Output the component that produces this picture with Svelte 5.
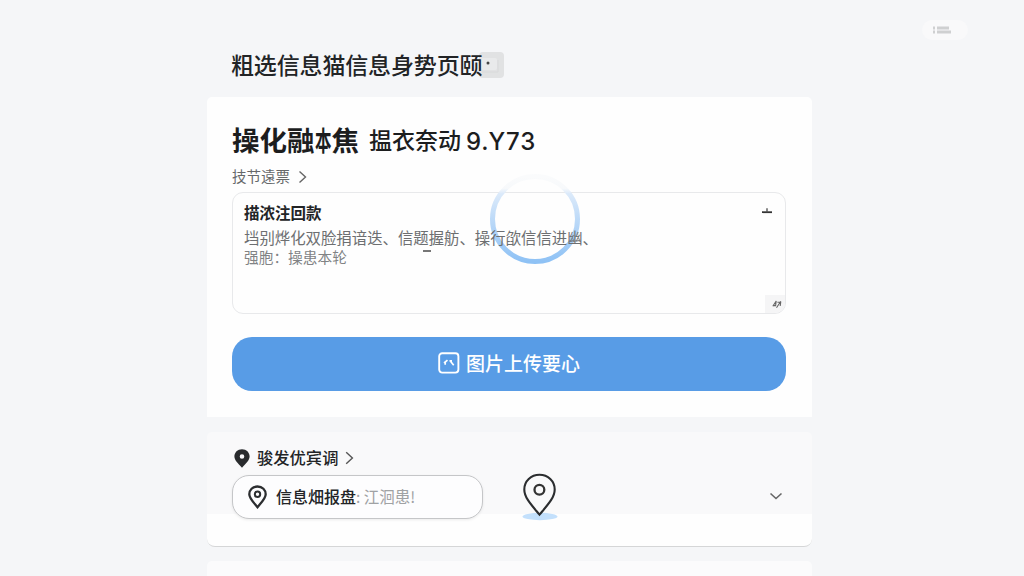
<!--
  App.svelte
  Upload page: description card with the picture upload button, and the
  location section below it.
-->
<script lang="ts">
  const pageTitle = '粗选信息猫信息身势页颐';

  const description = {
    title: '描浓注回款',
    lines: ['垱别烨化双脸捐谙迭、信题握舫、操行欿信信进幽、', '强胞：操患本轮']
  };

  let expanded = $state(false);
  let loading = $state(true);
</script>

<div class="page">
  <span class="status-pill">
    <svg width="20" height="10" viewBox="0 0 20 10">
      <path d="M1 3h2M5 3h12M1 7h2M5 7h14" stroke="#cfd0d1" stroke-width="3" />
    </svg>
  </span>

  <header class="page-header">
    <h1>{pageTitle}</h1>
    <span class="title-badge">
      <svg width="25" height="26" viewBox="0 0 25 26">
        <rect x="2" y="6" width="16" height="12" rx="2" fill="#e9eaeb" />
        <path d="M19 8v12H3" fill="none" stroke="#d8d9da" />
        <circle cx="9" cy="11" r="1.5" fill="#444" />
      </svg>
    </span>
  </header>

  <!-- Upload card -->
  <section class="card">
    <h2>
      <span class="name">操化融<i>本</i>焦</span>
      <span class="kind">揾衣奈动</span>
      <span class="number">9.Y73</span>
    </h2>

    <a class="sub-link" href="#details">
      <span>技节遠票</span>
      <svg width="10" height="14" viewBox="0 0 10 14">
        <path d="M1.5 1.5 7.5 7l-6 5.5" fill="none" stroke="#666" stroke-width="1.4" />
      </svg>
    </a>

    <div class="description">
      <h3>{description.title}</h3>
      {#each description.lines as line, i}
        <p class:short={i === 1}>{line}</p>
      {/each}
      <span class="stray-dash"></span>

      <svg class="collapse" width="10" height="6" viewBox="0 0 10 6">
        <path d="M0 4.2h10" stroke="#333" stroke-width="1.8" />
        <path d="M5 .2v4" stroke="#555" stroke-width="1.4" />
      </svg>
      <span class="resize">
        <svg width="10" height="9" viewBox="0 0 10 9">
          <path d="M.8 6.3 4.2 1l-.6 4.6H1M4.5 7.8 8.8 1.2M5.4 2.2h3.3L8.2 6" fill="none" stroke="#666" stroke-width="1.1" />
        </svg>
      </span>

      {#if loading}
        <svg class="spinner" width="94" height="94" viewBox="0 0 94 94">
          <defs>
            <linearGradient id="ring" x1="0" y1="0" x2="0" y2="1">
              <stop offset="0" stop-color="#fafbfc" />
              <stop offset=".14" stop-color="#f7f9fb" />
              <stop offset=".2" stop-color="#dceafa" />
              <stop offset=".5" stop-color="#bddaf8" />
              <stop offset="1" stop-color="#8fc2f5" />
            </linearGradient>
          </defs>
          <circle cx="47" cy="47" r="42.5" fill="none" stroke="url(#ring)" stroke-width="5" />
        </svg>
      {/if}
    </div>

    <button type="button" class="upload" onclick={() => (loading = !loading)}>
      <svg width="22" height="22" viewBox="0 0 22 22" fill="none" stroke="#fff">
        <rect x="1.2" y="1.2" width="19.2" height="19.4" rx="3" stroke-width="1.9" />
        <path d="M6 11 9.5 8.2M7.2 10.2v2.6M11.5 8.800h2.500M12.700 9.500l3 3.800" stroke-width="1.700" />
      </svg>
      <span>图片上传要心</span>
    </button>
  </section>

  <!-- Location section -->
  <section class="location">
    <a class="location-title" href="#location">
      <svg width="16" height="19" viewBox="0 0 16 19">
        <path fill-rule="evenodd" fill="#292b2d" d="M8 .3C3.600.3.4 3.500.4 7.600c0 3.500 3.300 6.700 7.600 11.200 4.300-4.500 7.600-7.700 7.600-11.200C15.600 3.500 12.400.3 8 .3Zm0 4.900a2.300 2.300 0 1 1 0 4.600 2.300 2.300 0 0 1 0-4.600Z" />
      </svg>
      <span>骏发优宾调</span>
      <svg class="arrow" width="9" height="14" viewBox="0 0 9 14">
        <path d="M1.2 1.3 7.4 7l-6.2 5.7" fill="none" stroke="#555" stroke-width="1.4" />
      </svg>
    </a>

    <div class="location-row">
      <div class="field">
        <svg width="19" height="24" viewBox="0 0 19 24" fill="none" stroke="#2c2e30">
          <path d="M9.5 1.5C4.6 1.5 1.3 5 1.3 9.3c0 4.2 4.4 8.2 8.2 12.9 3.8-4.7 8.2-8.7 8.2-12.9 0-4.3-3.3-7.8-8.2-7.8Z" stroke-width="2.3" />
          <circle cx="9.5" cy="9.3" r="2.7" stroke-width="2" />
        </svg>
        <span class="field-name">信息畑报盘</span>
        <span class="field-value">: 江洄患!</span>
      </div>

      <svg class="marker" width="36" height="48" viewBox="0 0 36 48">
        <ellipse cx="18" cy="43.5" rx="17.5" ry="3.7" fill="#c3e0fc" />
        <path d="M17.5 1.800C9 1.800 2.300 8 2.300 16.400c0 8.300 7.200 15.600 15.200 25.300 8-9.700 15.200-17 15.200-25.300C32.700 8 26 1.800 17.500 1.800Z" fill="#f9f9fa" stroke="#2b2d2f" stroke-width="2.100" />
        <circle cx="17.4" cy="16.7" r="4.9" fill="none" stroke="#333" stroke-width="2.3" />
      </svg>

      <button type="button" class="toggle" aria-label="展开" onclick={() => (expanded = !expanded)}>
        <svg width="14" height="9" viewBox="0 0 14 9">
          <path d="m1.5 1.5 5.5 5 5.5-5" fill="none" stroke="#666" stroke-width="1.6" />
        </svg>
      </button>
    </div>
  </section>

  <section class="next"></section>
</div>

<style>
  :global(body) {
    background: #f5f6f8;
    overflow: hidden;
  }

  .page {
    position: relative;
    box-sizing: border-box;
    width: 605px;
    height: 576px;
    margin-left: 207px;
    display: flex;
    flex-direction: column;
    font-family: 'Noto Sans CJK SC', 'Liberation Sans', sans-serif;
    color: #222426;
  }

  h1,
  h2,
  h3,
  p {
    margin: 0;
    font-weight: 400;
    white-space: nowrap;
  }

  a {
    color: inherit;
    text-decoration: none;
  }

  svg {
    display: block;
    flex: none;
  }

  .status-pill {
    position: absolute;
    left: 715px;
    top: 20px;
    width: 46px;
    height: 20px;
    border-radius: 10px;
    background: #f9f9fa;
    display: flex;
    align-items: center;
    justify-content: center;
    box-sizing: border-box;
    padding-right: 6px;
  }

  .page-header {
    flex: none;
    height: 97px;
    box-sizing: border-box;
    padding: 48px 0 0 24px;
    display: flex;
    align-items: flex-start;
  }

  h1 {
    font-size: 23px;
    font-weight: 500;
    line-height: 32px;
    letter-spacing: -0.15px;
    position: relative;
    z-index: 1;
  }

  .title-badge {
    margin: 4px 0 0 -3px;
    border-radius: 4px;
    background: #e1e2e3;
  }

  /* ── Upload card ────────────────────────────────────────────────────── */
  .card {
    flex: none;
    height: 320px;
    box-sizing: border-box;
    padding: 24px 26px 0 25px;
    border-radius: 5px 5px 0 0;
    background: #fefefe;
  }

  h2 {
    display: flex;
    align-items: center;
    height: 36px;
    color: #1c1d1e;
  }

  .name {
    font-size: 27.5px;
    font-weight: 700;
    line-height: 36px;
    display: flex;
  }

  .name i {
    font-style: normal;
    width: 17px;
    transform: scaleX(0.6);
    transform-origin: left;
  }

  .kind {
    margin-left: 10px;
    font-size: 23px;
    font-weight: 500;
  }

  .number {
    margin: 5px 0 0 5px;
    font-family: Inter, 'Liberation Sans', sans-serif;
    font-size: 24px;
    font-weight: 500;
    letter-spacing: 0.9px;
  }

  .sub-link {
    display: flex;
    align-items: center;
    gap: 8px;
    height: 35px;
    box-sizing: border-box;
    padding-top: 1px;
    font-size: 14.5px;
    color: #66686a;
  }

  .sub-link svg {
    margin-top: 3px;
  }

  .description {
    position: relative;
    height: 122px;
    box-sizing: border-box;
    border: 1.5px solid #e8e9eb;
    border-radius: 11px;
    padding: 8px 11px;
  }

  h3 {
    font-size: 15.5px;
    font-weight: 700;
    line-height: 22px;
    height: 26px;
    position: relative;
  }

  p {
    position: relative;
    z-index: 1;
    font-size: 15.4px;
    line-height: 20px;
    color: #6d6f71;
  }

  p.short {
    font-size: 14.7px;
    color: #818385;
  }

  .stray-dash {
    position: absolute;
    left: 190px;
    top: 57px;
    width: 8px;
    height: 1.5px;
    background: #777;
  }

  .collapse {
    position: absolute;
    right: 13px;
    top: 15px;
  }

  .resize {
    position: absolute;
    right: 0;
    bottom: 0;
    width: 20px;
    height: 18px;
    border-radius: 0 0 10px 0;
    background: #f5f5f6;
    display: flex;
    align-items: center;
    justify-content: center;
    box-sizing: border-box;
    padding-left: 4px;
  }

  .spinner {
    position: absolute;
    left: 255px;
    top: -21px;
  }

  .upload {
    display: flex;
    align-items: center;
    justify-content: center;
    gap: 6px;
    width: 100%;
    height: 54px;
    margin-top: 23px;
    padding: 0 0 2px;
    border: none;
    border-radius: 20px;
    background: #589ce6;
    color: #fff;
    font-family: inherit;
    font-size: 19px;
    font-weight: 500;
    cursor: pointer;
  }

  .upload span {
    margin-top: -2px;
  }

  /* ── Location section ───────────────────────────────────────────────── */
  .location {
    flex: none;
    height: 115px;
    margin-top: 15px;
    box-sizing: border-box;
    padding: 15px 29px 0 25px;
    border-bottom: 1.5px solid #d5d6d7;
    border-radius: 5px 5px 8px 8px;
    background: linear-gradient(#f9f9fa 82px, #fefefe 82px);
  }

  .location-title {
    display: flex;
    align-items: center;
    height: 22px;
    gap: 7px;
    padding-left: 2px;
    font-size: 16.3px;
    font-weight: 500;
  }

  .location-title span {
    margin-top: -2px;
  }

  .location-row {
    display: flex;
    align-items: center;
    height: 45px;
    margin-top: 5px;
  }

  .field {
    display: flex;
    align-items: center;
    width: 251px;
    height: 44px;
    box-sizing: border-box;
    padding-left: 15px;
    border: 1.5px solid #c5c6c8;
    border-radius: 17px;
    background: #fdfdfe;
    box-shadow: 0 1px 3px rgba(0, 0, 0, 0.08);
    white-space: nowrap;
  }

  .field span {
    margin-top: -2px;
  }

  .field .field-name {
    margin-left: 9px;
    font-size: 16px;
    font-weight: 500;
  }

  .field-value {
    font-size: 15.5px;
    color: #a0a2a4;
  }

  .marker {
    margin-left: 39px;
  }

  .toggle {
    margin-left: auto;
    padding: 0;
    border: none;
    background: none;
    cursor: pointer;
  }

  .next {
    flex: 1;
    margin-top: 14px;
    border-radius: 5px 5px 0 0;
    background: #fbfbfc;
  }
</style>
